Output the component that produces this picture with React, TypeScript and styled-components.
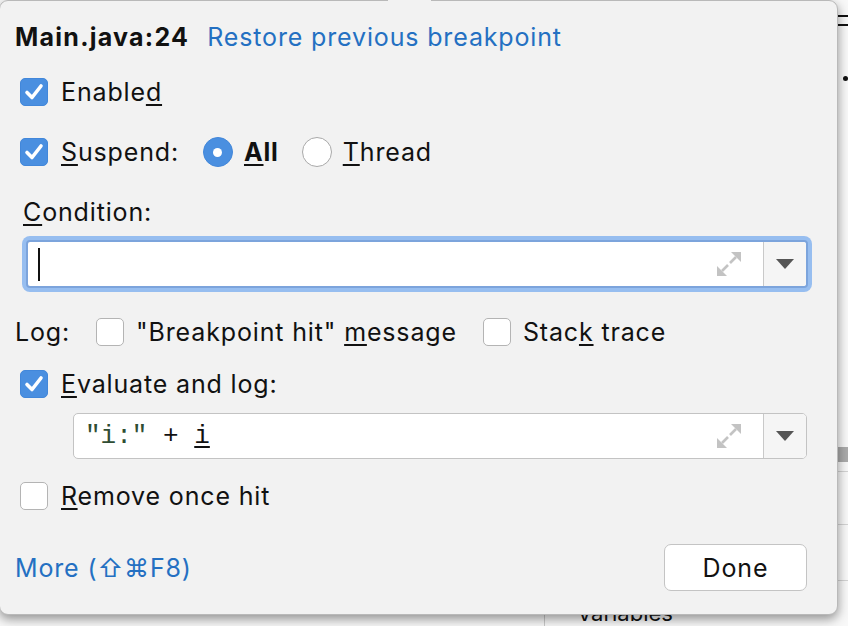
import React from 'react';
import styled, { createGlobalStyle } from 'styled-components';

const Global = createGlobalStyle`
  html, body { margin: 0; padding: 0; }
  body {
    width: 848px;
    height: 626px;
    overflow: hidden;
    background: #f7f7f7;
    font-family: Inter, "Noto Sans", sans-serif;
  }
`;

const Screen = styled.div`
  position: relative;
  width: 848px;
  height: 626px;
  overflow: hidden;
  background: #f8f8f8;
  display: grid;
  grid-template-columns: 838px 10px;
  grid-template-rows: 615px 11px;
`;

const RightStrip = styled.div`
  grid-column: 2;
  grid-row: 1;
  display: flex;
  flex-direction: column;
`;

const HLine = styled.div<{ $mt: number; $h: number; $c: string }>`
  margin-top: ${(p) => p.$mt}px;
  height: ${(p) => p.$h}px;
  background: ${(p) => p.$c};
  flex: none;
`;

const Dot = styled.div`
  margin: 50px 0 0 5px;
  width: 5px;
  height: 5px;
  border-radius: 50%;
  background: #111;
`;

const BottomStrip = styled.div`
  grid-column: 1 / span 2;
  grid-row: 2;
  display: flex;
  align-items: flex-start;
`;

const VLine = styled.div`
  margin-left: 544px;
  width: 1px;
  height: 11px;
  background: #c9c9c9;
`;

const Variables = styled.div`
  margin-left: 32px;
  margin-top: -13px;
  font-size: 22px;
  line-height: 22px;
  color: #111;
`;

const Popup = styled.div`
  position: absolute;
  top: 0;
  left: -1px;
  width: 839px;
  height: 615px;
  box-sizing: border-box;
  background: #f2f2f2;
  border: 1px solid #b9b9b9;
  border-radius: 9px;
  box-shadow: 0 4px 11px rgba(0, 0, 0, 0.42);
  padding: 0 30px 0 15px;
  display: flex;
  flex-direction: column;
  color: #111;
  font-size: 25px;
  letter-spacing: 0.85px;
`;

const Pointer = styled.div`
  position: absolute;
  top: -1px;
  left: 388px;
  width: 43px;
  height: 2px;
  background: #f2f2f2;
`;

const Header = styled.div`
  margin-top: 19px;
  height: 34px;
  display: flex;
  align-items: center;
  gap: 18px;
`;

const Title = styled.span`
  font-weight: 700;
  letter-spacing: 1.25px;
`;

const Link = styled.span`
  color: #2470c2;
`;

const Row = styled.div<{ $mt: number; $pl?: number }>`
  margin-top: ${(p) => p.$mt}px;
  padding-left: ${(p) => p.$pl ?? 0}px;
  height: 40px;
  display: flex;
  align-items: center;
`;

const Label = styled.span<{ $ml?: number; $bold?: boolean }>`
  margin-left: ${(p) => p.$ml ?? 0}px;
  font-weight: ${(p) => (p.$bold ? 700 : 400)};
  white-space: pre;
`;

const U = styled.span`
  text-decoration: underline;
  text-decoration-thickness: 2px;
  text-underline-offset: 3px;
`;

const Box = styled.span<{ $checked?: boolean; $ml?: number }>`
  margin-left: ${(p) => p.$ml ?? 0}px;
  width: 28px;
  height: 28px;
  box-sizing: border-box;
  border-radius: 5px;
  flex: none;
  display: flex;
  align-items: center;
  justify-content: center;
  background: ${(p) => (p.$checked ? '#4a8fe0' : '#ffffff')};
  border: ${(p) => (p.$checked ? '1px solid #4287da' : '1.5px solid #b4b4b4')};
`;

const Radio = styled.span<{ $checked?: boolean; $ml?: number }>`
  margin-left: ${(p) => p.$ml ?? 0}px;
  width: 30px;
  height: 30px;
  box-sizing: border-box;
  border-radius: 50%;
  flex: none;
  display: flex;
  align-items: center;
  justify-content: center;
  background: ${(p) => (p.$checked ? '#4a8fe0' : '#ffffff')};
  border: ${(p) => (p.$checked ? '1px solid #4287da' : '1.5px solid #a9a9a9')};
`;

const RadioDot = styled.span`
  width: 9px;
  height: 9px;
  border-radius: 50%;
  background: #fff;
`;

const Field = styled.div<{ $focused?: boolean; $ml: number; $mt: number; $h: number }>`
  margin-top: ${(p) => p.$mt}px;
  margin-left: ${(p) => p.$ml}px;
  margin-right: ${(p) => (p.$focused ? -1 : 0)}px;
  height: ${(p) => p.$h}px;
  box-sizing: border-box;
  background: #fff;
  border-radius: ${(p) => (p.$focused ? 4 : 5)}px;
  border: ${(p) => (p.$focused ? '2px solid #7ca4dc' : '1.5px solid #c3c3c3')};
  box-shadow: ${(p) => (p.$focused ? '0 0 0 4px #97bef0' : 'none')};
  display: flex;
  align-items: stretch;
  flex: none;
`;

const Editor = styled.div`
  flex: 1;
  display: flex;
  align-items: center;
  padding-left: 11px;
  font-family: "Liberation Mono", "DejaVu Sans Mono", monospace;
  font-size: 26px;
  letter-spacing: 0;
  color: #111;
  white-space: pre;
`;

const Caret = styled.span`
  width: 2px;
  height: 33px;
  background: #111;
  margin-left: -1px;
`;

const Str = styled.span`
  color: #2f4d33;
`;

const ExpandWrap = styled.div`
  display: flex;
  align-items: center;
  margin-right: 22px;
`;

const Divider = styled.div`
  width: 1.5px;
  background: #c9c9c9;
`;

const DropButton = styled.div`
  width: 42px;
  display: flex;
  align-items: center;
  justify-content: center;
  background: #f5f5f5;
  border-radius: 0 4px 4px 0;
`;

const Footer = styled.div`
  margin-top: 28px;
  height: 47px;
  display: flex;
  align-items: center;
  justify-content: space-between;
`;

const Button = styled.button`
  width: 143px;
  height: 47px;
  box-sizing: border-box;
  background: #fff;
  border: 1.5px solid #c4c4c4;
  border-radius: 7px;
  font-family: inherit;
  font-size: 25px;
  letter-spacing: 0.85px;
  color: #111;
  padding: 0;
`;

const Check = () => (
  <svg width="20" height="20" viewBox="0 0 20 20">
    <path d="M3 10.5 L8 15.5 L17 4" fill="none" stroke="#fff" strokeWidth="3.6" strokeLinecap="round" strokeLinejoin="round" />
  </svg>
);

const ExpandIcon = () => (
  <svg width="24" height="24" viewBox="0 0 24 24">
    <polygon points="14,0 24,0 24,10" fill="#c3c3c3" />
    <line x1="19" y1="5" x2="13" y2="11" stroke="#c3c3c3" strokeWidth="2.6" />
    <polygon points="0,14 0,24 10,24" fill="#c3c3c3" />
    <line x1="5" y1="19" x2="11" y2="13" stroke="#c3c3c3" strokeWidth="2.6" />
  </svg>
);

const Triangle = () => (
  <svg width="18" height="10" viewBox="0 0 18 10">
    <polygon points="0,0 18,0 9,10" fill="#555" />
  </svg>
);

const FieldTail = () => (
  <>
    <ExpandWrap>
      <ExpandIcon />
    </ExpandWrap>
    <Divider />
    <DropButton>
      <Triangle />
    </DropButton>
  </>
);

export default function App() {
  return (
    <>
      <Global />
      <Screen>
        <RightStrip>
          <HLine $mt={15} $h={2} $c="#111" />
          <HLine $mt={7} $h={2} $c="#111" />
          <Dot />
          <HLine $mt={366} $h={15} $c="#ababab" />
          <HLine $mt={9} $h={1} $c="#d3d3d3" />
          <HLine $mt={52} $h={1} $c="#d3d3d3" />
          <HLine $mt={55} $h={1} $c="#d3d3d3" />
        </RightStrip>
        <BottomStrip>
          <VLine />
          <Variables>Variables</Variables>
        </BottomStrip>
        <Popup>
          <Pointer />
          <Header>
            <Title>Main.java:24</Title>
            <Link>Restore previous breakpoint</Link>
          </Header>

          <Row $mt={18} $pl={5}>
            <Box $checked>
              <Check />
            </Box>
            <Label $ml={13}>
              Enable<U>d</U>
            </Label>
          </Row>

          <Row $mt={20} $pl={5}>
            <Box $checked>
              <Check />
            </Box>
            <Label $ml={13}>
              <U>S</U>uspend:
            </Label>
            <Radio $checked $ml={24}>
              <RadioDot />
            </Radio>
            <Label $ml={11} $bold>
              <U>A</U>ll
            </Label>
            <Radio $ml={23} />
            <Label $ml={11}>
              <U>T</U>hread
            </Label>
          </Row>

          <Row $mt={20} $pl={8}>
            <Label>
              <U>C</U>ondition:
            </Label>
          </Row>

          <Field $focused $ml={11} $mt={8} $h={48}>
            <Editor>
              <Caret />
            </Editor>
            <FieldTail />
          </Field>

          <Row $mt={24}>
            <Label>Log:</Label>
            <Box $ml={26} />
            <Label $ml={12}>
              "Breakpoint hit" <U>m</U>essage
            </Label>
            <Box $ml={26} />
            <Label $ml={12}>
              Stac<U>k</U> trace
            </Label>
          </Row>

          <Row $mt={12} $pl={5}>
            <Box $checked>
              <Check />
            </Box>
            <Label $ml={13}>
              <U>E</U>valuate and log:
            </Label>
          </Row>

          <Field $ml={58} $mt={9} $h={46}>
            <Editor>
              <Str>"i:"</Str> + <U>i</U>
            </Editor>
            <FieldTail />
          </Field>

          <Row $mt={17} $pl={5}>
            <Box />
            <Label $ml={13}>
              <U>R</U>emove once hit
            </Label>
          </Row>

          <Footer>
            <Link>More (⇧⌘F8)</Link>
            <Button>Done</Button>
          </Footer>
        </Popup>
      </Screen>
    </>
  );
}
